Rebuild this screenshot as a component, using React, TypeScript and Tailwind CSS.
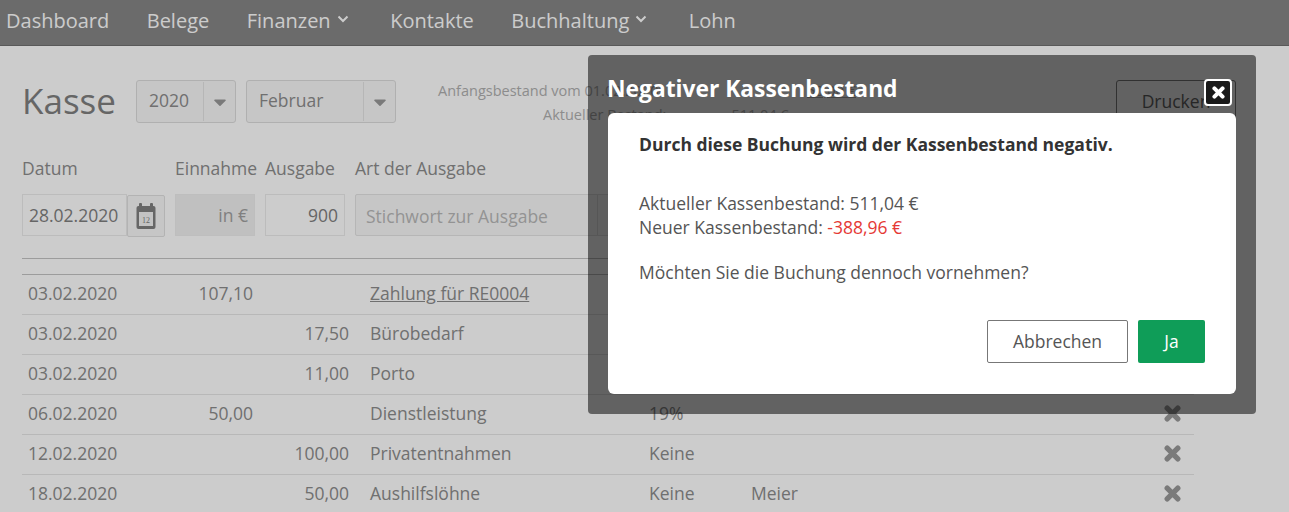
import { FaCaretDown } from "react-icons/fa";

const rows = [
  { date: "03.02.2020", income: "107,10", expense: "", art: "Zahlung für RE0004", tax: "", name: "", link: true },
  { date: "03.02.2020", income: "", expense: "17,50", art: "Bürobedarf", tax: "19%", name: "" },
  { date: "03.02.2020", income: "", expense: "11,00", art: "Porto", tax: "19%", name: "" },
  { date: "06.02.2020", income: "50,00", expense: "", art: "Dienstleistung", tax: "19%", name: "" },
  { date: "12.02.2020", income: "", expense: "100,00", art: "Privatentnahmen", tax: "Keine", name: "" },
  { date: "18.02.2020", income: "", expense: "50,00", art: "Aushilfslöhne", tax: "Keine", name: "Meier" },
];

const Chevron = () => (
  <svg width="12" height="8" viewBox="0 0 12 8" className="mb-[4px] mr-[4px]">
    <path d="M1.5 1.5 L6 6 L10.5 1.5" fill="none" stroke="currentColor" strokeWidth="2" />
  </svg>
);

// chunky rounded cross, same shape as the old font-awesome "remove" glyph
const Cross = ({ size, width, className }: { size: number; width: number; className: string }) => (
  <svg width={size} height={size} viewBox="0 0 16 16" className={className}>
    <path d="M3 3 L13 13 M13 3 L3 13" fill="none" stroke="currentColor" strokeWidth={width} strokeLinecap="round" />
  </svg>
);

const NavItem = ({ label, menu }: { label: string; menu?: boolean }) => (
  <div className="flex items-center gap-[6px] text-[#ffffff]">
    <span>{label}</span>
    {menu && <Chevron />}
  </div>
);

const Select = ({ label, width }: { label: string; width: string }) => (
  <div className={`flex h-[43px] items-stretch rounded-[3px] border border-[#dcdcdc] bg-[#f8f8f8] text-[17.5px] text-[#8c8c8c] ${width}`}>
    <div className="flex flex-1 items-center pl-[12px] pb-[3px]">{label}</div>
    <div className="my-[1px] flex w-[32px] items-center justify-center border-l border-[#e4e4e4]">
      <FaCaretDown className="text-[20px] text-[#999]" />
    </div>
  </div>
);

const CalendarIcon = () => (
  <svg width="20" height="26" viewBox="0 0 20 26">
    <rect x="0.5" y="3" width="19" height="23" rx="2" fill="#808080" />
    <rect x="3" y="0" width="3" height="6" rx="1" fill="#808080" />
    <rect x="14" y="0" width="3" height="6" rx="1" fill="#808080" />
    <rect x="3" y="9" width="14" height="14" fill="#f4f4f4" />
    <text x="10" y="20" textAnchor="middle" fontSize="8" fontFamily="'Liberation Serif', serif" fill="#808080">
      12
    </text>
  </svg>
);

export default function App() {
  return (
    <div className="relative h-[512px] w-[1289px] overflow-hidden bg-white font-['Open_Sans',sans-serif] text-[17.5px] text-[#8c8c8c]">
      <nav className="flex h-[46px] items-center gap-[37.5px] border-b border-[#707070] bg-[#868686] pb-[4px] pl-[6px] text-[20px]">
        <NavItem label="Dashboard" />
        <NavItem label="Belege" />
        <NavItem label="Finanzen" menu />
        <NavItem label="Kontakte" />
        <NavItem label="Buchhaltung" menu />
        <NavItem label="Lohn" />
      </nav>

      <main className="ml-[22px] flex w-[1172px] flex-col">
        <div className="mt-[34px] flex h-[43px] items-center">
          <h1 className="w-[114px] text-[35px] font-normal text-[#808080]">Kasse</h1>
          <div className="flex gap-[10px]">
            <Select label="2020" width="w-[100px]" />
            <Select label="Februar" width="w-[150px]" />
          </div>
          <div className="ml-[42px] flex w-[418px] flex-col pt-[3px] text-[14.5px] leading-[24px] text-[#b0b0b0]">
            <div className="flex justify-between">
              <span>Anfangsbestand vom 01.02.2020:</span>
              <span className="underline">50,00 €</span>
            </div>
            <div className="pl-[105px]">
              Aktueller Bestand:<span className="ml-[65px]">511,04 €</span>
            </div>
          </div>
          <div className="ml-auto mr-[-42px] flex h-[43px] w-[120px] items-center justify-center rounded-[3px] border border-[#808080] text-[#666]">
            Drucken
          </div>
        </div>

        <div className="mt-[32px] flex h-[27px] items-center">
          <span className="w-[153px]">Datum</span>
          <span className="w-[90px]">Einnahme</span>
          <span className="w-[90px]">Ausgabe</span>
          <span>Art der Ausgabe</span>
        </div>

        <div className="mt-[12px] flex h-[43px] items-start">
          <input
            readOnly
            value="28.02.2020"
            className="h-[42px] w-[105px] border border-[#ebebeb] pl-[6px] text-[#808080] outline-none"
          />
          <div className="mt-[1px] flex h-[42px] w-[38px] items-center justify-center rounded-[2px] border border-[#e0e0e0] bg-[#f8f8f8]">
            <CalendarIcon />
          </div>
          <input
            readOnly
            placeholder="in €"
            className="ml-[10px] h-[42px] w-[80px] border border-[#eeeeee] bg-[#f0f0f0] pr-[6px] text-right outline-none placeholder:text-[#a0a0a0]"
          />
          <input
            readOnly
            value="900"
            className="ml-[10px] h-[42px] w-[80px] border border-[#ebebeb] pr-[6px] text-right text-[#808080] outline-none"
          />
          <div className="ml-[10px] flex h-[42px] w-[400px] items-stretch rounded-[2px] border border-[#e4e4e4] bg-[#f8f8f8]">
            <div className="flex w-[242px] items-center border-r border-[#e0e0e0] pl-[10px] pt-[2px] text-[#b8b8b8]">
              Stichwort zur Ausgabe
            </div>
          </div>
        </div>

        <div className="mt-[21px] h-[17px] border-y border-[#c4c4c4]" />

        {rows.map((row, i) => (
          <div
            key={i}
            className="grid h-[40px] shrink-0 grid-cols-[138px_93px_96px_300px_102px_399px_44px] items-center border-b border-[#e6e6e6] pb-[2px]"
          >
            <span className="pl-[6px]">{row.date}</span>
            <span className="text-right">{row.income}</span>
            <span className="text-right">{row.expense}</span>
            <span className={row.link ? "pl-[21px] underline" : "pl-[21px]"}>{row.art}</span>
            <span>{row.tax}</span>
            <span>{row.name}</span>
            <span className="flex justify-center">
              <Cross size={17} width={5} className="text-[#999]" />
            </span>
          </div>
        ))}
      </main>

      <div className="absolute inset-0 bg-black/20" />

      <div className="absolute left-[588px] top-[55px] flex h-[359px] w-[668px] flex-col rounded-[4px] bg-black/[.52] px-[20px] pb-[20px]">
        <div className="relative flex h-[58px] shrink-0 items-center pt-[11px] text-[22.8px] font-bold text-white">
          <span className="-ml-[1px]">Negativer Kassenbestand</span>
          <button className="absolute right-[4px] top-[24px] flex h-[27px] w-[28px] items-center justify-center rounded-[4px] border-2 border-white bg-[#1a1a1a] text-white">
            <Cross size={13} width={5} className="" />
          </button>
        </div>
        <div className="flex flex-1 flex-col rounded-[6px] bg-white px-[31px] pb-[31px] text-[#555]">
          <p className="mt-[19px] text-[17.5px] font-bold leading-[24px] text-[#333]">
            Durch diese Buchung wird der Kassenbestand negativ.
          </p>
          <p className="mt-[35px] leading-[24px]">Aktueller Kassenbestand: 511,04 €</p>
          <p className="leading-[24px]">
            Neuer Kassenbestand: <span className="text-[#e53935]">-388,96 €</span>
          </p>
          <p className="mt-[21px] leading-[24px]">Möchten Sie die Buchung dennoch vornehmen?</p>
          <div className="mt-auto flex justify-end gap-[10px]">
            <button className="h-[43px] w-[141px] rounded-[2px] border border-[#777] bg-white text-[#555]">
              Abbrechen
            </button>
            <button className="h-[43px] w-[67px] rounded-[2px] bg-[#0f9d58] text-white">Ja</button>
          </div>
        </div>
      </div>
    </div>
  );
}
